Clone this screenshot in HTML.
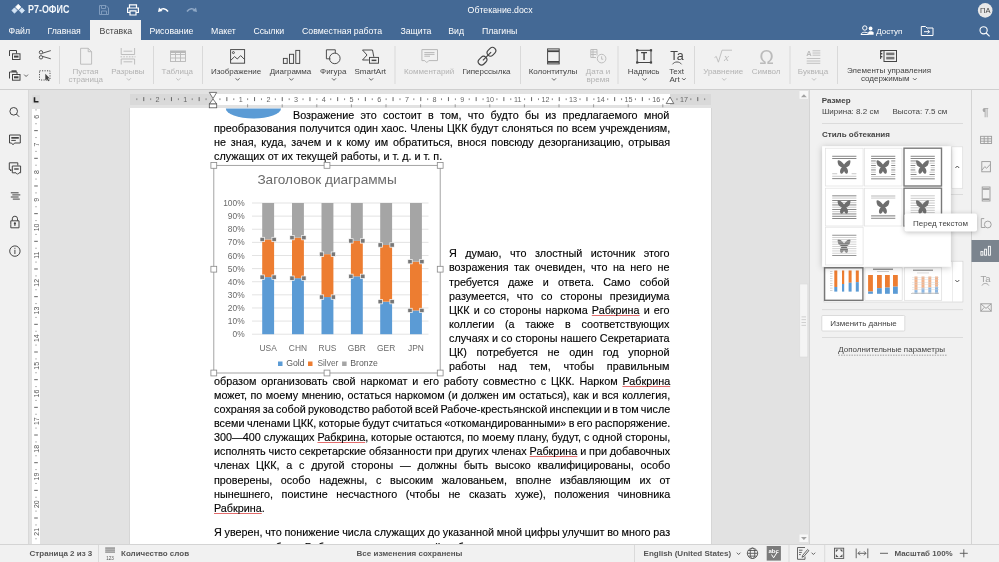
<!DOCTYPE html>
<html><head><meta charset="utf-8">
<style>
*{margin:0;padding:0;box-sizing:border-box}
html,body{width:999px;height:562px;overflow:hidden;background:#e2e2e2;font-family:"Liberation Sans",sans-serif}
.a{position:absolute}
.t{position:absolute;white-space:nowrap;line-height:1}
svg{position:absolute;left:0;top:0;overflow:visible;will-change:transform}
#hdr{left:0;top:0;width:999px;height:40px;background:#446995}
#tb{left:0;top:40px;width:999px;height:50px;background:#f1f1f1;border-bottom:1px solid #cfcfcf}
#lp{left:0;top:90px;width:29px;height:454px;background:#f1f1f1;border-right:1px solid #d8d8d8}
#rp{left:809px;top:90px;width:163px;height:454px;background:#f1f1f1;border-left:1px solid #d4d4d4}
#rb{left:971px;top:90px;width:28px;height:454px;background:#f1f1f1;border-left:1px solid #d4d4d4}
#sb{left:0;top:544px;width:999px;height:18px;background:#f1f1f1;border-top:1px solid #d4d4d4}
#page{left:130px;top:108px;width:581px;height:436px;background:#fff}
.dl{position:absolute;font-size:10.8px;color:#000;-webkit-text-stroke:0.22px rgba(0,0,0,0.6);white-space:nowrap;text-align:justify;text-align-last:justify;line-height:1;height:11px;will-change:transform}
.dn{text-align-last:left}
.sp{text-decoration:underline;text-decoration-color:#e46c6c;text-underline-offset:1px;text-decoration-thickness:1px;text-decoration-skip-ink:none}

</style></head><body>
<div id="hdr" class="a"></div>
<div id="tb" class="a"></div>
<div id="lp" class="a"></div>
<div id="page" class="a"></div>
<div id="rp" class="a"></div>
<div id="rb" class="a"></div>
<div id="sb" class="a"></div>
<div class="a" style="left:129px;top:108px;width:1px;height:436px;background:#d6d6d6"></div>
<div class="a" style="left:711px;top:108px;width:1px;height:436px;background:#d6d6d6"></div>
<div class="a" style="left:90px;top:20px;width:50.5px;height:20px;background:#f1f1f1"></div>
<svg width="999" height="40" style="font-family:'Liberation Sans'">
 <g font-size="8.75" fill="#fff">
  <text x="8.5" y="33.5">Файл</text>
  <text x="47.5" y="33.5">Главная</text>
  <text x="99.6" y="33.5" fill="#444">Вставка</text>
  <text x="149.4" y="33.5">Рисование</text>
  <text x="211" y="33.5">Макет</text>
  <text x="253.4" y="33.5">Ссылки</text>
  <text x="302" y="33.5">Совместная работа</text>
  <text x="400.4" y="33.5">Защита</text>
  <text x="448.2" y="33.5">Вид</text>
  <text x="481.9" y="33.5">Плагины</text>
  <text x="467.6" y="12.6">Обтекание.docx</text>
  <text x="876.3" y="34.2" font-size="8">Доступ</text>
 </g>
 <text x="28" y="12.8" font-size="10" font-weight="bold" fill="#f4f8fc" textLength="41.4" lengthAdjust="spacingAndGlyphs">Р7-ОФИС</text>
 <!-- logo diamonds -->
 <path d="M18.2 4.3 L20.9 7 L18.2 9.7 L15.5 7Z" fill="#fff" stroke="#fff" stroke-width="0.7" stroke-linejoin="round"/>
 <path d="M14.5 7.8 L17.2 10.5 L14.5 13.2 L11.8 10.5Z" fill="#d3e4f6" stroke="#d3e4f6" stroke-width="0.7" stroke-linejoin="round"/>
 <path d="M21.9 7.8 L24.6 10.5 L21.9 13.2 L19.2 10.5Z" fill="#d3e4f6" stroke="#d3e4f6" stroke-width="0.7" stroke-linejoin="round"/>
 <!-- save (disabled) -->
 <g fill="none" stroke="#7f9bbd" stroke-width="1">
  <path d="M99.5 5.5 H106 L108.5 8 V14.5 H99.5Z"/>
  <path d="M101.5 5.5 V8.5 H105.5 V5.5"/>
  <path d="M101.5 14.5 V11 H106.5 V14.5"/>
 </g>
 <!-- print -->
 <g fill="none" stroke="#fff" stroke-width="1.2">
  <path d="M129.5 8 V4.8 H136.5 V8"/>
  <path d="M130 12.5 H127.6 V8 H138.4 V12.5 H136"/>
  <path d="M130 10.8 H136 V15 H130Z"/>
 </g>
 <!-- undo -->
 <path d="M159 7.5 L158 12 L162.5 11 Z" fill="#fff"/>
 <path d="M160 10.2 C162 8.2 165.5 8 168 11.5" fill="none" stroke="#fff" stroke-width="1.6"/>
 <!-- redo (disabled) -->
 <path d="M196 7.5 L197 12 L192.5 11 Z" fill="#8fa8c6"/>
 <path d="M195 10.2 C193 8.2 189.5 8 187 11.5" fill="none" stroke="#8fa8c6" stroke-width="1.6"/>
 <!-- avatar -->
 <circle cx="985.2" cy="10.4" r="7.3" fill="#e8e8e8"/>
 <text x="985.2" y="13.2" font-size="7.5" fill="#444" text-anchor="middle">ПА</text>
 <!-- users icon -->
 <g fill="none" stroke="#fff" stroke-width="1">
  <circle cx="864.8" cy="28" r="2.2"/>
  <path d="M861 34.5 C861 31.5 868.5 31.5 868.5 34.5 Z"/>
 </g>
 <circle cx="870.6" cy="28.5" r="1.9" fill="#fff"/>
 <path d="M868.2 34.7 V32.5 C868.5 30.8 872.8 30.8 873.6 32.5 V34.7Z" fill="#fff"/>
 <!-- open folder icon -->
 <g fill="none" stroke="#fff" stroke-width="1">
  <path d="M921.3 26.5 H925.5 L927 28 H933 V35.5 H921.3 Z"/>
  <path d="M924 31.7 H929.5 M927.7 29.9 L929.5 31.7 L927.7 33.5"/>
 </g>
 <!-- search -->
 <g fill="none" stroke="#fff" stroke-width="1.1">
  <circle cx="983.6" cy="30.3" r="3.6"/>
  <path d="M986.2 33 L989.6 36.3"/>
 </g>
</svg>
<svg width="999" height="90" style="font-family:'Liberation Sans'">
 <!-- separators -->
 <g fill="#d9d9d9">
  <rect x="59" y="46" width="1" height="38"/><rect x="153" y="46" width="1" height="38"/>
  <rect x="202" y="46" width="1" height="38"/><rect x="394.5" y="46" width="1" height="38"/>
  <rect x="520" y="46" width="1" height="38"/><rect x="617.5" y="46" width="1" height="38"/>
  <rect x="694" y="46" width="1" height="38"/><rect x="789.5" y="46" width="1" height="38"/>
  <rect x="837" y="46" width="1" height="38"/>
 </g>
 <g font-size="8" fill="#444" text-anchor="middle">
  <text x="236.1" y="73.6">Изображение</text>
  <text x="290.5" y="73.6">Диаграмма</text>
  <text x="333.2" y="73.6">Фигура</text>
  <text x="370.3" y="73.6">SmartArt</text>
  <text x="486.5" y="73.6">Гиперссылка</text>
  <text x="553" y="73.6">Колонтитулы</text>
  <text x="643.6" y="73.6">Надпись</text>
  <text x="676.6" y="73.6">Text</text>
  <text x="674.5" y="81.5">Art</text>
  <text x="889" y="73.4">Элементы управления</text>
  <text x="885.2" y="81.4">содержимым</text>
 </g>
 <g font-size="8" fill="#b3b3b3" text-anchor="middle">
  <text x="85.6" y="74.3">Пустая</text>
  <text x="85.8" y="82.3">страница</text>
  <text x="127.8" y="74.3">Разрывы</text>
  <text x="177.3" y="74.3">Таблица</text>
  <text x="429.1" y="73.6">Комментарий</text>
  <text x="598" y="73.6">Дата и</text>
  <text x="598" y="81.6">время</text>
  <text x="723.2" y="73.6">Уравнение</text>
  <text x="766.1" y="73.6">Символ</text>
  <text x="813" y="73.6">Буквица</text>
 </g>
 <!-- chevrons -->
 <g fill="none" stroke="#555" stroke-width="0.9">
  <path d="M235.6 78.3 L237.6 80.3 L239.6 78.3"/>
  <path d="M289.4 78.3 L291.4 80.3 L293.4 78.3"/>
  <path d="M332.0 78.3 L334.0 80.3 L336.0 78.3"/>
  <path d="M369.2 78.3 L371.2 80.3 L373.2 78.3"/>
  <path d="M552.0 78.3 L554.0 80.3 L556.0 78.3"/>
  <path d="M642.6 78.3 L644.6 80.3 L646.6 78.3"/>
  <path d="M682.1 78.2 L683.9 80 L685.7 78.2"/>
  <path d="M913.0 78.2 L914.8 80 L916.6 78.2"/>
  <path d="M24.2 74.6 L26.1 76.5 L28 74.6"/>
 </g>
 <g fill="none" stroke="#bbb" stroke-width="0.9">
  <path d="M126.8 78.3 L128.8 80.3 L130.8 78.3"/>
  <path d="M176.3 78.3 L178.3 80.3 L180.3 78.3"/>
  <path d="M722.2 78.3 L724.2 80.3 L726.2 78.3"/>
  <path d="M812.0 78.3 L814.0 80.3 L816.0 78.3"/>
 </g>
 <!-- copy -->
 <g fill="none" stroke="#444" stroke-width="1">
  <path d="M9.5 56 V50.5 H16.5 V53.5"/>
  <rect x="12.5" y="53.8" width="7.5" height="5.7"/>
 </g>
 <rect x="14" y="55.6" width="4.5" height="2" fill="#444"/>
 <!-- cut -->
 <g fill="none" stroke="#444" stroke-width="0.9">
  <circle cx="41" cy="52.3" r="1.7"/><circle cx="41" cy="57.3" r="1.7"/>
  <path d="M42.5 53.2 L50.8 50.6 M42.5 56.4 L50.8 58.8"/>
 </g>
 <!-- paste -->
 <g fill="none" stroke="#444" stroke-width="1">
  <path d="M9.5 78.5 V72 H17 V74"/>
  <rect x="12.5" y="74.5" width="7.5" height="5.7"/>
 </g>
 <rect x="11.5" y="70.3" width="5" height="1.6" fill="#444"/>
 <rect x="14" y="76.3" width="4.5" height="2" fill="#444"/>
 <!-- select all -->
 <path d="M39.5 70.8 H50 V80 H39.5Z" fill="none" stroke="#444" stroke-width="0.9" stroke-dasharray="1.2 1.3"/>
 <path d="M45.3 73.8 L45.3 80.5 L46.8 79 L48.2 81.3 L49.2 80.8 L47.9 78.5 L49.7 78.3Z" fill="#444"/>
 <!-- blank page (disabled) -->
 <path d="M80.6 48.3 H88.2 L91.6 51.7 V64.2 H80.6Z M88.2 48.3 V51.7 H91.6" fill="none" stroke="#b8b8b8" stroke-width="0.9"/>
 <!-- breaks (disabled) -->
 <g fill="none" stroke="#b8b8b8" stroke-width="0.9">
  <path d="M121.2 48 V54.5 H134.6 V48"/>
  <path d="M121.2 64.5 V59 H134.6 V64.5"/>
  <path d="M123.5 51.2 H132.3 M123.5 61.8 H132.3"/>
  <path d="M120.5 56.8 H135.5" stroke-dasharray="1.6 1.2"/>
 </g>
 <!-- table (disabled) -->
 <g fill="none" stroke="#b8b8b8" stroke-width="0.9">
  <rect x="170.5" y="51" width="15" height="10.5"/>
  <path d="M170.5 54.5 H185.5 M170.5 58 H185.5 M175.5 51 V61.5 M180.5 51 V61.5"/>
 </g>
 <rect x="170.5" y="50.8" width="15" height="2.2" fill="#b8b8b8"/>
 <!-- image -->
 <g fill="none" stroke="#444" stroke-width="0.95">
  <rect x="230.6" y="49.6" width="14" height="13.6"/>
  <circle cx="233.4" cy="52.6" r="1"/>
  <path d="M230.8 60.3 L234.6 56.6 L237.3 59 L240.6 55.6 L244.5 59.4"/>
 </g>
 <!-- chart -->
 <g fill="none" stroke="#444" stroke-width="0.95">
  <rect x="283.4" y="58.4" width="3.8" height="5"/>
  <rect x="289.5" y="54.3" width="4.1" height="9.1"/>
  <rect x="295.8" y="50.4" width="3.9" height="13"/>
 </g>
 <!-- shape -->
 <g fill="none" stroke="#444" stroke-width="0.95">
  <path d="M330.5 58.8 H326.4 V49.8 H335.3 V53.3"/>
  <circle cx="334.8" cy="58.4" r="5.3"/>
 </g>
 <!-- smartart -->
 <g fill="none" stroke="#444" stroke-width="0.95">
  <path d="M373.8 56.8 L372.5 50 H362.5 L367 55 L362.5 60 H368.8"/>
  <rect x="369.5" y="57.4" width="9" height="5.8"/>
 </g>
 <rect x="371.6" y="59.6" width="4.8" height="1.5" fill="#444"/>
 <!-- comment (disabled) -->
 <g fill="none" stroke="#b8b8b8" stroke-width="1">
  <path d="M421.9 49.6 H437.5 V60.6 H428.8 L426.8 62.6 L424.8 60.6 H421.9Z"/>
  <path d="M424.3 52.6 H434.5 M424.3 54.4 H434.5 M424.3 56.2 H430"/>
 </g>
 <!-- hyperlink -->
 <g fill="none" stroke="#444" stroke-width="1.15" transform="translate(487 56.2) rotate(-45)">
  <rect x="1.6" y="-3.3" width="9.4" height="6.6" rx="3.3"/>
  <rect x="-11" y="-3.3" width="9.4" height="6.6" rx="3.3"/>
  <path d="M-5.8 0 H5.8"/>
 </g>
 <!-- header/footer -->
 <g fill="none" stroke="#444" stroke-width="1">
  <rect x="547.6" y="48.9" width="11.6" height="15"/>
 </g>
 <rect x="548" y="50.3" width="11" height="1.8" fill="#444"/>
 <rect x="548" y="61" width="11" height="1.8" fill="#444"/>
 <!-- date time (disabled) -->
 <g fill="none" stroke="#b8b8b8" stroke-width="0.9">
  <path d="M597 55.5 V49.5 H590.8 V57.5 H596"/>
  <path d="M590.8 52 H597 M593 49.5 V57.5 M590.8 54.5 H596"/>
  <circle cx="601.6" cy="58.6" r="4.3"/>
  <path d="M601.6 56.3 V59.2 H603.2"/>
 </g>
 <!-- textbox -->
 <g fill="none" stroke="#444" stroke-width="1">
  <rect x="637.2" y="50.3" width="13.8" height="12.2"/>
 </g>
 <g fill="#444">
  <rect x="636.1" y="49.2" width="2.2" height="2.2"/><rect x="649.9" y="49.2" width="2.2" height="2.2"/>
  <rect x="636.1" y="61.4" width="2.2" height="2.2"/><rect x="649.9" y="61.4" width="2.2" height="2.2"/>
 </g>
 <text x="644.1" y="60.3" font-size="10" font-weight="bold" fill="#444" text-anchor="middle">T</text>
 <!-- text art -->
 <text x="677" y="59.8" font-size="12.6" fill="#444" text-anchor="middle">Ta</text>
 <path d="M672.5 64.3 C674.5 61.2 679.5 61.2 681.5 64.3" fill="none" stroke="#444" stroke-width="0.9"/>
 <!-- equation (disabled) -->
 <g fill="none" stroke="#bbb" stroke-width="0.9">
  <path d="M714.5 57.6 L716.3 56.5 L718.4 62.2 L722 50.2 H732"/>
 </g>
 <text x="726.5" y="61" font-size="11" font-style="italic" fill="#bbb" text-anchor="middle" font-family="Liberation Serif">x</text>
 <!-- symbol (disabled) -->
 <text x="766.5" y="63.6" font-size="19.5" fill="#bbb" text-anchor="middle" font-family="Liberation Sans">Ω</text>
 <!-- drop cap (disabled) -->
 <text x="809" y="56.4" font-size="7.5" font-weight="bold" fill="#bbb" text-anchor="middle">A</text>
 <g fill="none" stroke="#bbb" stroke-width="0.9">
  <path d="M812.5 50.8 H820.3 M812.5 53 H820.3 M812.5 55.2 H820.3 M806.7 58.5 H820.3 M806.7 61 H820.3 M806.7 63.3 H820.3"/>
 </g>
 <!-- content controls -->
 <g fill="none" stroke="#444" stroke-width="1">
  <rect x="884" y="50.5" width="12.5" height="11"/>
  <path d="M884 50.5 H880.6 V59"/>
 </g>
 <rect x="880.3" y="50.2" width="2" height="1.4" fill="#444"/>
 <rect x="880.3" y="53" width="2" height="1.4" fill="#444"/>
 <rect x="880.3" y="56" width="2" height="1.4" fill="#444"/>
 <rect x="886.2" y="52.6" width="8.2" height="2.6" fill="#777"/>
 <rect x="886.2" y="56.8" width="8.2" height="2.6" fill="#777"/>
</svg>
<svg width="999" height="562" style="font-family:'Liberation Sans'">
 <g fill="none" stroke="#444" stroke-width="1">
  <circle cx="13.7" cy="111.3" r="3.8"/><path d="M16.4 114 L19.2 116.8"/>
  <path d="M9.5 135 H20.3 V143 H14.5 L13 144.8 L11.5 143 H9.5Z"/>
  <path d="M17.8 165.5 V162.8 H9.3 V169.5 H10.5 V171 L12 169.5"/>
  <path d="M12.3 166 H20.6 V172.8 H19 L17.5 174.3 L16 172.8 H12.3Z"/>
  <path d="M10.8 224.5 V220.8 H19 V227.8 H10.8 Z"/>
  <path d="M12.3 220.8 V218.8 A2.6 2.6 0 0 1 17.5 218.8 V220.8"/>
  <circle cx="14.9" cy="251.1" r="5.2"/>
 </g>
 <g fill="#444">
  <rect x="11.3" y="137" width="7.5" height="1.7"/><rect x="11.3" y="139.9" width="4.5" height="1"/>
  <rect x="14.2" y="168.3" width="4.5" height="1.4"/>
  <rect x="10.8" y="192.3" width="7.8" height="1"/><rect x="12.3" y="194.4" width="8" height="1"/>
  <rect x="10.8" y="196.5" width="7.8" height="1"/><rect x="12.8" y="198.6" width="7" height="1"/>
    <rect x="14.4" y="249.8" width="1" height="4.2"/><rect x="14.4" y="247.8" width="1" height="1"/>
 </g>
 <circle cx="14.9" cy="223.4" r="1.1" fill="#444"/><rect x="14.4" y="223.6" width="1" height="2.4" fill="#444"/>
</svg>

<div class="a" style="left:130px;top:94px;width:581px;height:10.5px;background:#d9d9d9"></div>
<div class="a" style="left:213px;top:94px;width:457px;height:10.5px;background:#fff"></div>
<div class="a" style="left:32px;top:95px;width:8px;height:9px;background:#dcdcdc"></div>
<div class="a" style="left:32px;top:108.5px;width:8px;height:436px;background:#fff"></div>
<svg width="999" height="562" style="font-family:'Liberation Sans'">
<path d="M34.5 97.2 V101.8 H38.5" fill="none" stroke="#222" stroke-width="1.6"/>
<rect x="136.32" y="98.3" width="1" height="1.8" fill="#888"/>
<rect x="143.25" y="97.1" width="1" height="4" fill="#666"/>
<rect x="150.18" y="98.3" width="1" height="1.8" fill="#888"/>
<text x="157.60" y="102.2" font-size="7.2" fill="#666" text-anchor="middle">2</text>
<rect x="164.03" y="98.3" width="1" height="1.8" fill="#888"/>
<rect x="170.95" y="97.1" width="1" height="4" fill="#666"/>
<rect x="177.88" y="98.3" width="1" height="1.8" fill="#888"/>
<text x="185.30" y="102.2" font-size="7.2" fill="#666" text-anchor="middle">1</text>
<rect x="191.72" y="98.3" width="1" height="1.8" fill="#888"/>
<rect x="198.65" y="97.1" width="1" height="4" fill="#666"/>
<rect x="205.57" y="98.3" width="1" height="1.8" fill="#888"/>
<rect x="219.43" y="98.3" width="1" height="1.8" fill="#888"/>
<rect x="226.35" y="97.1" width="1" height="4" fill="#666"/>
<rect x="233.28" y="98.3" width="1" height="1.8" fill="#888"/>
<text x="240.70" y="102.2" font-size="7.2" fill="#666" text-anchor="middle">1</text>
<rect x="247.12" y="98.3" width="1" height="1.8" fill="#888"/>
<rect x="254.05" y="97.1" width="1" height="4" fill="#666"/>
<rect x="260.98" y="98.3" width="1" height="1.8" fill="#888"/>
<text x="268.40" y="102.2" font-size="7.2" fill="#666" text-anchor="middle">2</text>
<rect x="274.82" y="98.3" width="1" height="1.8" fill="#888"/>
<rect x="281.75" y="97.1" width="1" height="4" fill="#666"/>
<rect x="288.68" y="98.3" width="1" height="1.8" fill="#888"/>
<text x="296.10" y="102.2" font-size="7.2" fill="#666" text-anchor="middle">3</text>
<rect x="302.52" y="98.3" width="1" height="1.8" fill="#888"/>
<rect x="309.45" y="97.1" width="1" height="4" fill="#666"/>
<rect x="316.38" y="98.3" width="1" height="1.8" fill="#888"/>
<text x="323.80" y="102.2" font-size="7.2" fill="#666" text-anchor="middle">4</text>
<rect x="330.23" y="98.3" width="1" height="1.8" fill="#888"/>
<rect x="337.15" y="97.1" width="1" height="4" fill="#666"/>
<rect x="344.07" y="98.3" width="1" height="1.8" fill="#888"/>
<text x="351.50" y="102.2" font-size="7.2" fill="#666" text-anchor="middle">5</text>
<rect x="357.92" y="98.3" width="1" height="1.8" fill="#888"/>
<rect x="364.85" y="97.1" width="1" height="4" fill="#666"/>
<rect x="371.77" y="98.3" width="1" height="1.8" fill="#888"/>
<text x="379.20" y="102.2" font-size="7.2" fill="#666" text-anchor="middle">6</text>
<rect x="385.62" y="98.3" width="1" height="1.8" fill="#888"/>
<rect x="392.55" y="97.1" width="1" height="4" fill="#666"/>
<rect x="399.48" y="98.3" width="1" height="1.8" fill="#888"/>
<text x="406.90" y="102.2" font-size="7.2" fill="#666" text-anchor="middle">7</text>
<rect x="413.32" y="98.3" width="1" height="1.8" fill="#888"/>
<rect x="420.25" y="97.1" width="1" height="4" fill="#666"/>
<rect x="427.17" y="98.3" width="1" height="1.8" fill="#888"/>
<text x="434.60" y="102.2" font-size="7.2" fill="#666" text-anchor="middle">8</text>
<rect x="441.02" y="98.3" width="1" height="1.8" fill="#888"/>
<rect x="447.95" y="97.1" width="1" height="4" fill="#666"/>
<rect x="454.88" y="98.3" width="1" height="1.8" fill="#888"/>
<text x="462.30" y="102.2" font-size="7.2" fill="#666" text-anchor="middle">9</text>
<rect x="468.72" y="98.3" width="1" height="1.8" fill="#888"/>
<rect x="475.65" y="97.1" width="1" height="4" fill="#666"/>
<rect x="482.57" y="98.3" width="1" height="1.8" fill="#888"/>
<text x="490.00" y="102.2" font-size="7.2" fill="#666" text-anchor="middle">10</text>
<rect x="496.43" y="98.3" width="1" height="1.8" fill="#888"/>
<rect x="503.35" y="97.1" width="1" height="4" fill="#666"/>
<rect x="510.27" y="98.3" width="1" height="1.8" fill="#888"/>
<text x="517.70" y="102.2" font-size="7.2" fill="#666" text-anchor="middle">11</text>
<rect x="524.12" y="98.3" width="1" height="1.8" fill="#888"/>
<rect x="531.05" y="97.1" width="1" height="4" fill="#666"/>
<rect x="537.97" y="98.3" width="1" height="1.8" fill="#888"/>
<text x="545.40" y="102.2" font-size="7.2" fill="#666" text-anchor="middle">12</text>
<rect x="551.83" y="98.3" width="1" height="1.8" fill="#888"/>
<rect x="558.75" y="97.1" width="1" height="4" fill="#666"/>
<rect x="565.67" y="98.3" width="1" height="1.8" fill="#888"/>
<text x="573.10" y="102.2" font-size="7.2" fill="#666" text-anchor="middle">13</text>
<rect x="579.52" y="98.3" width="1" height="1.8" fill="#888"/>
<rect x="586.45" y="97.1" width="1" height="4" fill="#666"/>
<rect x="593.38" y="98.3" width="1" height="1.8" fill="#888"/>
<text x="600.80" y="102.2" font-size="7.2" fill="#666" text-anchor="middle">14</text>
<rect x="607.22" y="98.3" width="1" height="1.8" fill="#888"/>
<rect x="614.15" y="97.1" width="1" height="4" fill="#666"/>
<rect x="621.08" y="98.3" width="1" height="1.8" fill="#888"/>
<text x="628.50" y="102.2" font-size="7.2" fill="#666" text-anchor="middle">15</text>
<rect x="634.92" y="98.3" width="1" height="1.8" fill="#888"/>
<rect x="641.85" y="97.1" width="1" height="4" fill="#666"/>
<rect x="648.77" y="98.3" width="1" height="1.8" fill="#888"/>
<text x="656.20" y="102.2" font-size="7.2" fill="#666" text-anchor="middle">16</text>
<rect x="662.62" y="98.3" width="1" height="1.8" fill="#888"/>
<rect x="669.55" y="97.1" width="1" height="4" fill="#666"/>
<rect x="676.47" y="98.3" width="1" height="1.8" fill="#888"/>
<text x="683.90" y="102.2" font-size="7.2" fill="#666" text-anchor="middle">17</text>
<rect x="690.33" y="98.3" width="1" height="1.8" fill="#888"/>
<rect x="697.25" y="97.1" width="1" height="4" fill="#666"/>
<rect x="704.17" y="98.3" width="1" height="1.8" fill="#888"/>
<rect x="247.10" y="104.3" width="1" height="3" fill="#999"/>
<rect x="281.70" y="104.3" width="1" height="3" fill="#999"/>
<rect x="316.30" y="104.3" width="1" height="3" fill="#999"/>
<rect x="350.90" y="104.3" width="1" height="3" fill="#999"/>
<rect x="385.50" y="104.3" width="1" height="3" fill="#999"/>
<rect x="420.10" y="104.3" width="1" height="3" fill="#999"/>
<rect x="454.70" y="104.3" width="1" height="3" fill="#999"/>
<rect x="489.30" y="104.3" width="1" height="3" fill="#999"/>
<rect x="523.90" y="104.3" width="1" height="3" fill="#999"/>
<rect x="558.50" y="104.3" width="1" height="3" fill="#999"/>
<rect x="593.10" y="104.3" width="1" height="3" fill="#999"/>
<rect x="627.70" y="104.3" width="1" height="3" fill="#999"/>
<rect x="662.30" y="104.3" width="1" height="3" fill="#999"/>
<g fill="#fff" stroke="#555" stroke-width="0.8">
 <path d="M209.3 92.4 H216.7 L213 98.6 Z"/>
 <path d="M213 99 L216.7 104 H209.3 Z"/>
 <rect x="209.3" y="104" width="7.4" height="3.8"/>
 <path d="M670 97 L673.8 103.6 H666.2 Z"/>
</g>
<rect x="35.5" y="109.38" width="1" height="1" fill="#777"/>
<text x="0" y="0" font-size="7" fill="#555" text-anchor="middle" transform="translate(38.6 116.80) rotate(-90)">6</text>
<rect x="35.5" y="123.22" width="1" height="1" fill="#777"/>
<rect x="34.2" y="130.13" width="3.6" height="1" fill="#666"/>
<rect x="35.5" y="137.05" width="1" height="1" fill="#777"/>
<text x="0" y="0" font-size="7" fill="#555" text-anchor="middle" transform="translate(38.6 144.47) rotate(-90)">7</text>
<rect x="35.5" y="150.89" width="1" height="1" fill="#777"/>
<rect x="34.2" y="157.81" width="3.6" height="1" fill="#666"/>
<rect x="35.5" y="164.72" width="1" height="1" fill="#777"/>
<text x="0" y="0" font-size="7" fill="#555" text-anchor="middle" transform="translate(38.6 172.14) rotate(-90)">8</text>
<rect x="35.5" y="178.56" width="1" height="1" fill="#777"/>
<rect x="34.2" y="185.48" width="3.6" height="1" fill="#666"/>
<rect x="35.5" y="192.39" width="1" height="1" fill="#777"/>
<text x="0" y="0" font-size="7" fill="#555" text-anchor="middle" transform="translate(38.6 199.81) rotate(-90)">9</text>
<rect x="35.5" y="206.23" width="1" height="1" fill="#777"/>
<rect x="34.2" y="213.14" width="3.6" height="1" fill="#666"/>
<rect x="35.5" y="220.06" width="1" height="1" fill="#777"/>
<text x="0" y="0" font-size="7" fill="#555" text-anchor="middle" transform="translate(38.6 227.48) rotate(-90)">10</text>
<rect x="35.5" y="233.90" width="1" height="1" fill="#777"/>
<rect x="34.2" y="240.81" width="3.6" height="1" fill="#666"/>
<rect x="35.5" y="247.73" width="1" height="1" fill="#777"/>
<text x="0" y="0" font-size="7" fill="#555" text-anchor="middle" transform="translate(38.6 255.15) rotate(-90)">11</text>
<rect x="35.5" y="261.57" width="1" height="1" fill="#777"/>
<rect x="34.2" y="268.49" width="3.6" height="1" fill="#666"/>
<rect x="35.5" y="275.40" width="1" height="1" fill="#777"/>
<text x="0" y="0" font-size="7" fill="#555" text-anchor="middle" transform="translate(38.6 282.82) rotate(-90)">12</text>
<rect x="35.5" y="289.24" width="1" height="1" fill="#777"/>
<rect x="34.2" y="296.16" width="3.6" height="1" fill="#666"/>
<rect x="35.5" y="303.07" width="1" height="1" fill="#777"/>
<text x="0" y="0" font-size="7" fill="#555" text-anchor="middle" transform="translate(38.6 310.49) rotate(-90)">13</text>
<rect x="35.5" y="316.91" width="1" height="1" fill="#777"/>
<rect x="34.2" y="323.82" width="3.6" height="1" fill="#666"/>
<rect x="35.5" y="330.74" width="1" height="1" fill="#777"/>
<text x="0" y="0" font-size="7" fill="#555" text-anchor="middle" transform="translate(38.6 338.16) rotate(-90)">14</text>
<rect x="35.5" y="344.58" width="1" height="1" fill="#777"/>
<rect x="34.2" y="351.50" width="3.6" height="1" fill="#666"/>
<rect x="35.5" y="358.41" width="1" height="1" fill="#777"/>
<text x="0" y="0" font-size="7" fill="#555" text-anchor="middle" transform="translate(38.6 365.83) rotate(-90)">15</text>
<rect x="35.5" y="372.25" width="1" height="1" fill="#777"/>
<rect x="34.2" y="379.17" width="3.6" height="1" fill="#666"/>
<rect x="35.5" y="386.08" width="1" height="1" fill="#777"/>
<text x="0" y="0" font-size="7" fill="#555" text-anchor="middle" transform="translate(38.6 393.50) rotate(-90)">16</text>
<rect x="35.5" y="399.92" width="1" height="1" fill="#777"/>
<rect x="34.2" y="406.84" width="3.6" height="1" fill="#666"/>
<rect x="35.5" y="413.75" width="1" height="1" fill="#777"/>
<text x="0" y="0" font-size="7" fill="#555" text-anchor="middle" transform="translate(38.6 421.17) rotate(-90)">17</text>
<rect x="35.5" y="427.59" width="1" height="1" fill="#777"/>
<rect x="34.2" y="434.51" width="3.6" height="1" fill="#666"/>
<rect x="35.5" y="441.42" width="1" height="1" fill="#777"/>
<text x="0" y="0" font-size="7" fill="#555" text-anchor="middle" transform="translate(38.6 448.84) rotate(-90)">18</text>
<rect x="35.5" y="455.26" width="1" height="1" fill="#777"/>
<rect x="34.2" y="462.18" width="3.6" height="1" fill="#666"/>
<rect x="35.5" y="469.09" width="1" height="1" fill="#777"/>
<text x="0" y="0" font-size="7" fill="#555" text-anchor="middle" transform="translate(38.6 476.51) rotate(-90)">19</text>
<rect x="35.5" y="482.93" width="1" height="1" fill="#777"/>
<rect x="34.2" y="489.85" width="3.6" height="1" fill="#666"/>
<rect x="35.5" y="496.76" width="1" height="1" fill="#777"/>
<text x="0" y="0" font-size="7" fill="#555" text-anchor="middle" transform="translate(38.6 504.18) rotate(-90)">20</text>
<rect x="35.5" y="510.60" width="1" height="1" fill="#777"/>
<rect x="34.2" y="517.51" width="3.6" height="1" fill="#666"/>
<rect x="35.5" y="524.43" width="1" height="1" fill="#777"/>
<text x="0" y="0" font-size="7" fill="#555" text-anchor="middle" transform="translate(38.6 531.85) rotate(-90)">21</text>
<rect x="35.5" y="538.27" width="1" height="1" fill="#777"/>
<path d="M225.8 108.5 A27.6 10 0 0 0 281 108.5 Z" fill="#5b9bd5"/>
<rect x="799.5" y="91" width="8.5" height="7.8" fill="#f7f7f7"/>
<path d="M801 97.2 L803.9 94.3 L806.8 97.2Z" fill="#a2a2a2"/>
<rect x="799.5" y="534.5" width="8.5" height="7.5" fill="#f7f7f7"/>
<path d="M801 537 L803.9 539.9 L806.8 537Z" fill="#a2a2a2"/>
<rect x="799.8" y="284" width="8" height="73" fill="#f4f4f4" stroke="#dadada" stroke-width="0.6"/>
<g fill="#c6c6c6"><rect x="801.5" y="316.5" width="4.5" height="0.8"/><rect x="801.5" y="319.3" width="4.5" height="0.8"/><rect x="801.5" y="322.1" width="4.5" height="0.8"/><rect x="801.5" y="324.9" width="4.5" height="0.8"/></g>
</svg>
<div class="dl" style="left:293.4px;top:109.54px;width:376.4px">Возражение это состоит в том, что будто бы из предлагаемого мной</div>
<div class="dl" style="left:213.6px;top:123.44px;width:456.2px">преобразования получится один хаос. Члены ЦКК будут слоняться по всем учреждениям,</div>
<div class="dl" style="left:213.6px;top:137.34px;width:456.2px">не зная, куда, зачем и к кому им обратиться, внося повсюду дезорганизацию, отрывая</div>
<div class="dl dn" style="left:213.6px;top:151.24px;width:240px">служащих от их текущей работы, и т. д. и т. п.</div>
<div class="dl" style="left:449.3px;top:248.24px;width:220.5px">Я думаю, что злостный источник этого</div>
<div class="dl" style="left:449.3px;top:262.39px;width:220.5px">возражения так очевиден, что на него не</div>
<div class="dl" style="left:449.3px;top:276.54px;width:220.5px">требуется даже и ответа. Само собой</div>
<div class="dl" style="left:449.3px;top:290.69px;width:220.5px">разумеется, что со стороны президиума</div>
<div class="dl" style="left:449.3px;top:304.84px;width:220.5px">ЦКК и со стороны наркома <span class="sp">Рабкрина</span> и его</div>
<div class="dl" style="left:449.3px;top:318.99px;width:220.5px">коллегии (а также в соответствующих</div>
<div class="dl" style="left:449.3px;top:333.14px;width:220.5px">случаях и со стороны нашего Секретариата</div>
<div class="dl" style="left:449.3px;top:347.29px;width:220.5px">ЦК) потребуется не один год упорной</div>
<div class="dl" style="left:449.3px;top:361.44px;width:220.5px">работы над тем, чтобы правильным</div>
<div class="dl" style="left:213.6px;top:375.59px;width:456.2px">образом организовать свой наркомат и его работу совместно с ЦКК. Нарком <span class="sp">Рабкрина</span></div>
<div class="dl" style="left:213.6px;top:389.74px;width:456.2px">может, по моему мнению, остаться наркомом (и должен им остаться), как и вся коллегия,</div>
<div class="dl" style="left:213.6px;top:403.89px;width:456.2px;word-spacing:-0.75px">сохраняя за собой руководство работой всей Рабоче-крестьянской инспекции и в том числе</div>
<div class="dl" style="left:213.6px;top:418.04px;width:456.2px;word-spacing:-0.6px">всеми членами ЦКК, которые будут считаться «откомандированными» в его распоряжение.</div>
<div class="dl" style="left:213.6px;top:432.19px;width:456.2px;word-spacing:-0.12px">300—400 служащих <span class="sp">Рабкрина</span>, которые остаются, по моему плану, будут, с одной стороны,</div>
<div class="dl" style="left:213.6px;top:446.34px;width:456.2px;word-spacing:-0.15px">исполнять чисто секретарские обязанности при других членах <span class="sp">Рабкрина</span> и при добавочных</div>
<div class="dl" style="left:213.6px;top:460.49px;width:456.2px">членах ЦКК, а с другой стороны — должны быть высоко квалифицированы, особо</div>
<div class="dl" style="left:213.6px;top:474.64px;width:456.2px">проверены, особо надежны, с высоким жалованьем, вполне избавляющим их от</div>
<div class="dl" style="left:213.6px;top:488.79px;width:456.2px">нынешнего, поистине несчастного (чтобы не сказать хуже), положения чиновника</div>
<div class="dl dn" style="left:213.6px;top:502.94px;width:200px"><span class="sp">Рабкрина</span>.</div>
<div class="dl" style="left:213.6px;top:527.44px;width:456.2px;word-spacing:-0.3px">Я уверен, что понижение числа служащих до указанной мной цифры улучшит во много раз</div>
<div class="dl" style="left:213.6px;top:541.54px;width:456.2px">качество работы <span class="sp">Рабкрина</span> и качество всей работы, давая в то же время возможность</div>
<svg width="999" height="562" style="font-family:'Liberation Sans'">
<rect x="213.8" y="165.4" width="226.4" height="207.6" fill="#fff" stroke="#9a9a9a" stroke-width="0.9"/>
<rect x="252" y="333.70" width="176.5" height="1" fill="#e3e3e3"/>
<rect x="252" y="320.58" width="176.5" height="1" fill="#e3e3e3"/>
<rect x="252" y="307.46" width="176.5" height="1" fill="#e3e3e3"/>
<rect x="252" y="294.34" width="176.5" height="1" fill="#e3e3e3"/>
<rect x="252" y="281.22" width="176.5" height="1" fill="#e3e3e3"/>
<rect x="252" y="268.10" width="176.5" height="1" fill="#e3e3e3"/>
<rect x="252" y="254.98" width="176.5" height="1" fill="#e3e3e3"/>
<rect x="252" y="241.86" width="176.5" height="1" fill="#e3e3e3"/>
<rect x="252" y="228.74" width="176.5" height="1" fill="#e3e3e3"/>
<rect x="252" y="215.62" width="176.5" height="1" fill="#e3e3e3"/>
<rect x="252" y="202.50" width="176.5" height="1" fill="#e3e3e3"/>
<text x="244.6" y="337.30" font-size="8.4" fill="#6a6a6a" text-anchor="end">0%</text>
<text x="244.6" y="324.18" font-size="8.4" fill="#6a6a6a" text-anchor="end">10%</text>
<text x="244.6" y="311.06" font-size="8.4" fill="#6a6a6a" text-anchor="end">20%</text>
<text x="244.6" y="297.94" font-size="8.4" fill="#6a6a6a" text-anchor="end">30%</text>
<text x="244.6" y="284.82" font-size="8.4" fill="#6a6a6a" text-anchor="end">40%</text>
<text x="244.6" y="271.70" font-size="8.4" fill="#6a6a6a" text-anchor="end">50%</text>
<text x="244.6" y="258.58" font-size="8.4" fill="#6a6a6a" text-anchor="end">60%</text>
<text x="244.6" y="245.46" font-size="8.4" fill="#6a6a6a" text-anchor="end">70%</text>
<text x="244.6" y="232.34" font-size="8.4" fill="#6a6a6a" text-anchor="end">80%</text>
<text x="244.6" y="219.22" font-size="8.4" fill="#6a6a6a" text-anchor="end">90%</text>
<text x="244.6" y="206.10" font-size="8.4" fill="#6a6a6a" text-anchor="end">100%</text>
<rect x="262.2" y="277.13" width="11.9" height="57.07" fill="#5b9bd5"/>
<rect x="262.2" y="239.47" width="11.9" height="37.65" fill="#ed7d31"/>
<rect x="262.2" y="203.0" width="11.9" height="36.47" fill="#a5a5a5"/>
<text x="268.15" y="351.4" font-size="8.4" fill="#6a6a6a" text-anchor="middle">USA</text>
<rect x="292.0" y="278.18" width="11.9" height="56.02" fill="#5b9bd5"/>
<rect x="292.0" y="237.64" width="11.9" height="40.54" fill="#ed7d31"/>
<rect x="292.0" y="203.0" width="11.9" height="34.64" fill="#a5a5a5"/>
<text x="297.95" y="351.4" font-size="8.4" fill="#6a6a6a" text-anchor="middle">CHN</text>
<rect x="321.5" y="297.07" width="11.9" height="37.13" fill="#5b9bd5"/>
<rect x="321.5" y="254.17" width="11.9" height="42.90" fill="#ed7d31"/>
<rect x="321.5" y="203.0" width="11.9" height="51.17" fill="#a5a5a5"/>
<text x="327.45" y="351.4" font-size="8.4" fill="#6a6a6a" text-anchor="middle">RUS</text>
<rect x="350.9" y="276.34" width="11.9" height="57.86" fill="#5b9bd5"/>
<rect x="350.9" y="240.92" width="11.9" height="35.42" fill="#ed7d31"/>
<rect x="350.9" y="203.0" width="11.9" height="37.92" fill="#a5a5a5"/>
<text x="356.85" y="351.4" font-size="8.4" fill="#6a6a6a" text-anchor="middle">GBR</text>
<rect x="380.2" y="301.66" width="11.9" height="32.54" fill="#5b9bd5"/>
<rect x="380.2" y="244.98" width="11.9" height="56.68" fill="#ed7d31"/>
<rect x="380.2" y="203.0" width="11.9" height="41.98" fill="#a5a5a5"/>
<text x="386.15" y="351.4" font-size="8.4" fill="#6a6a6a" text-anchor="middle">GER</text>
<rect x="410.0" y="310.45" width="11.9" height="23.75" fill="#5b9bd5"/>
<rect x="410.0" y="261.65" width="11.9" height="48.81" fill="#ed7d31"/>
<rect x="410.0" y="203.0" width="11.9" height="58.65" fill="#a5a5a5"/>
<text x="415.95" y="351.4" font-size="8.4" fill="#6a6a6a" text-anchor="middle">JPN</text>
<rect x="260.00" y="274.93" width="4.4" height="4.4" fill="#777" stroke="#fff" stroke-width="0.7"/>
<rect x="271.90" y="274.93" width="4.4" height="4.4" fill="#777" stroke="#fff" stroke-width="0.7"/>
<rect x="260.00" y="237.27" width="4.4" height="4.4" fill="#777" stroke="#fff" stroke-width="0.7"/>
<rect x="271.90" y="237.27" width="4.4" height="4.4" fill="#777" stroke="#fff" stroke-width="0.7"/>
<rect x="289.80" y="275.98" width="4.4" height="4.4" fill="#777" stroke="#fff" stroke-width="0.7"/>
<rect x="301.70" y="275.98" width="4.4" height="4.4" fill="#777" stroke="#fff" stroke-width="0.7"/>
<rect x="289.80" y="235.44" width="4.4" height="4.4" fill="#777" stroke="#fff" stroke-width="0.7"/>
<rect x="301.70" y="235.44" width="4.4" height="4.4" fill="#777" stroke="#fff" stroke-width="0.7"/>
<rect x="319.30" y="294.87" width="4.4" height="4.4" fill="#777" stroke="#fff" stroke-width="0.7"/>
<rect x="331.20" y="294.87" width="4.4" height="4.4" fill="#777" stroke="#fff" stroke-width="0.7"/>
<rect x="319.30" y="251.97" width="4.4" height="4.4" fill="#777" stroke="#fff" stroke-width="0.7"/>
<rect x="331.20" y="251.97" width="4.4" height="4.4" fill="#777" stroke="#fff" stroke-width="0.7"/>
<rect x="348.70" y="274.14" width="4.4" height="4.4" fill="#777" stroke="#fff" stroke-width="0.7"/>
<rect x="360.60" y="274.14" width="4.4" height="4.4" fill="#777" stroke="#fff" stroke-width="0.7"/>
<rect x="348.70" y="238.72" width="4.4" height="4.4" fill="#777" stroke="#fff" stroke-width="0.7"/>
<rect x="360.60" y="238.72" width="4.4" height="4.4" fill="#777" stroke="#fff" stroke-width="0.7"/>
<rect x="378.00" y="299.46" width="4.4" height="4.4" fill="#777" stroke="#fff" stroke-width="0.7"/>
<rect x="389.90" y="299.46" width="4.4" height="4.4" fill="#777" stroke="#fff" stroke-width="0.7"/>
<rect x="378.00" y="242.78" width="4.4" height="4.4" fill="#777" stroke="#fff" stroke-width="0.7"/>
<rect x="389.90" y="242.78" width="4.4" height="4.4" fill="#777" stroke="#fff" stroke-width="0.7"/>
<rect x="407.80" y="308.25" width="4.4" height="4.4" fill="#777" stroke="#fff" stroke-width="0.7"/>
<rect x="419.70" y="308.25" width="4.4" height="4.4" fill="#777" stroke="#fff" stroke-width="0.7"/>
<rect x="407.80" y="259.45" width="4.4" height="4.4" fill="#777" stroke="#fff" stroke-width="0.7"/>
<rect x="419.70" y="259.45" width="4.4" height="4.4" fill="#777" stroke="#fff" stroke-width="0.7"/>
<text x="257.4" y="184.4" font-size="13.6" fill="#6a6a6a">Заголовок диаграммы</text>
<rect x="278" y="361.5" width="4.5" height="4.5" fill="#5b9bd5"/><text x="286.2" y="366.3" font-size="8.7" fill="#595959">Gold</text>
<rect x="308" y="361.5" width="4.5" height="4.5" fill="#ed7d31"/><text x="317.4" y="366.3" font-size="8.4" fill="#6a6a6a">Silver</text>
<rect x="342.1" y="361.5" width="4.5" height="4.5" fill="#a5a5a5"/><text x="350.3" y="366.3" font-size="8.7" fill="#595959">Bronze</text>
<rect x="210.90" y="162.50" width="5.8" height="5.8" fill="#fff" stroke="#888" stroke-width="0.8"/>
<rect x="210.90" y="266.30" width="5.8" height="5.8" fill="#fff" stroke="#888" stroke-width="0.8"/>
<rect x="210.90" y="370.10" width="5.8" height="5.8" fill="#fff" stroke="#888" stroke-width="0.8"/>
<rect x="324.10" y="162.50" width="5.8" height="5.8" fill="#fff" stroke="#888" stroke-width="0.8"/>
<rect x="324.10" y="370.10" width="5.8" height="5.8" fill="#fff" stroke="#888" stroke-width="0.8"/>
<rect x="437.30" y="162.50" width="5.8" height="5.8" fill="#fff" stroke="#888" stroke-width="0.8"/>
<rect x="437.30" y="266.30" width="5.8" height="5.8" fill="#fff" stroke="#888" stroke-width="0.8"/>
<rect x="437.30" y="370.10" width="5.8" height="5.8" fill="#fff" stroke="#888" stroke-width="0.8"/>
</svg>
<svg width="999" height="562" style="font-family:'Liberation Sans'">
<defs>
 
</defs>
<g fill="#444">
 <text x="821.8" y="102.8" font-size="8" font-weight="bold">Размер</text>
 <text x="822" y="113.9" font-size="8">Ширина: 8.2 см</text>
 <text x="892.5" y="113.9" font-size="8">Высота: 7.5 см</text>
 <text x="822" y="137.3" font-size="8" font-weight="bold">Стиль обтекания</text>
</g>
<rect x="822" y="123" width="141" height="0.8" fill="#d6d6d6"/>
<rect x="822" y="194.2" width="141" height="0.8" fill="#d6d6d6"/>
<rect x="822" y="309.3" width="141" height="0.8" fill="#d6d6d6"/>
<rect x="822" y="337.2" width="141" height="0.8" fill="#d6d6d6"/>
<!-- wrap combo button right -->
<rect x="951.8" y="146.8" width="10.9" height="41.5" fill="#fff" stroke="#dcdcdc" stroke-width="0.7"/>
<path d="M955.4 168 L957.3 166 L959.2 168" fill="none" stroke="#444" stroke-width="0.9"/>
<!-- chart style combo -->
<rect x="823.9" y="261.2" width="139" height="40.8" fill="#fff" stroke="#d4d4d4" stroke-width="0.7"/>
<path d="M955.3 280 L957.3 282 L959.3 280" fill="none" stroke="#444" stroke-width="0.9"/>
<rect x="952.3" y="261.2" width="0.7" height="40.8" fill="#e4e4e4"/>

<rect x="824.6" y="267.8" width="38.3" height="32.5" fill="#fff" stroke="#777" stroke-width="1.4"/>
<rect x="834.3" y="270.5" width="3.0" height="16.46" fill="#ed7d31"/>
<rect x="834.3" y="286.96" width="3.0" height="4.64" fill="#5b9bd5"/>
<rect x="842.0" y="270.5" width="2.2" height="13.50" fill="#ed7d31"/>
<rect x="842.0" y="284.00" width="2.2" height="7.60" fill="#5b9bd5"/>
<rect x="848.6" y="270.5" width="3.0" height="12.24" fill="#ed7d31"/>
<rect x="848.6" y="282.74" width="3.0" height="8.86" fill="#5b9bd5"/>
<rect x="855.8" y="270.5" width="3.0" height="11.61" fill="#ed7d31"/>
<rect x="855.8" y="282.11" width="3.0" height="9.50" fill="#5b9bd5"/>
<rect x="830" y="271.00" width="2.5" height="0.6" fill="#bbb"/>
<rect x="830" y="273.40" width="2.5" height="0.6" fill="#bbb"/>
<rect x="830" y="275.80" width="2.5" height="0.6" fill="#bbb"/>
<rect x="830" y="278.20" width="2.5" height="0.6" fill="#bbb"/>
<rect x="830" y="280.60" width="2.5" height="0.6" fill="#bbb"/>
<rect x="830" y="283.00" width="2.5" height="0.6" fill="#bbb"/>
<rect x="830" y="285.40" width="2.5" height="0.6" fill="#bbb"/>
<rect x="830" y="287.80" width="2.5" height="0.6" fill="#bbb"/>
<rect x="830" y="290.20" width="2.5" height="0.6" fill="#bbb"/>
<rect x="864.9" y="267.8" width="37.3" height="32.5" fill="#fff" stroke="#dadada" stroke-width="0.7"/>
<rect x="873" y="268.6" width="20" height="1.3" fill="#8a8a8a"/>
<rect x="877" y="271.3" width="12" height="0.7" fill="#bbb"/>
<rect x="868.1" y="275" width="4.8" height="16.54" fill="#ed7d31"/>
<rect x="868.1" y="291.54" width="4.8" height="2.26" fill="#5b9bd5"/>
<rect x="877.0" y="275" width="4.8" height="13.16" fill="#ed7d31"/>
<rect x="877.0" y="288.16" width="4.8" height="5.64" fill="#5b9bd5"/>
<rect x="885.0" y="275" width="4.8" height="12.60" fill="#ed7d31"/>
<rect x="885.0" y="287.60" width="4.8" height="6.20" fill="#5b9bd5"/>
<rect x="893.0" y="275" width="4.8" height="11.66" fill="#ed7d31"/>
<rect x="893.0" y="286.66" width="4.8" height="7.14" fill="#5b9bd5"/>
<rect x="904.3" y="267.8" width="37.4" height="32.5" fill="#fff" stroke="#dadada" stroke-width="0.7"/>
<rect x="913" y="269.6" width="20" height="1.3" fill="#9a9a9a"/>
<rect x="917" y="272.6" width="12" height="0.7" fill="#ccc"/>
<rect x="914.5" y="276.5" width="3" height="13.60" fill="#f2b48d"/>
<rect x="914.5" y="290.10" width="3" height="3.40" fill="#8db7e2"/>
<rect x="921.5" y="276.5" width="3" height="11.90" fill="#f2b48d"/>
<rect x="921.5" y="288.40" width="3" height="5.10" fill="#8db7e2"/>
<rect x="928.3" y="276.5" width="3" height="11.05" fill="#f2b48d"/>
<rect x="928.3" y="287.55" width="3" height="5.95" fill="#8db7e2"/>
<rect x="935" y="276.5" width="3" height="10.20" fill="#f2b48d"/>
<rect x="935" y="286.70" width="3" height="6.80" fill="#8db7e2"/>
<rect x="912" y="277.00" width="27" height="0.4" fill="#d5d5d5"/>
<rect x="912" y="279.50" width="27" height="0.4" fill="#d5d5d5"/>
<rect x="912" y="282.00" width="27" height="0.4" fill="#d5d5d5"/>
<rect x="912" y="284.50" width="27" height="0.4" fill="#d5d5d5"/>
<rect x="912" y="287.00" width="27" height="0.4" fill="#d5d5d5"/>
<rect x="912" y="289.50" width="27" height="0.4" fill="#d5d5d5"/>
<rect x="912" y="292.00" width="27" height="0.4" fill="#d5d5d5"/>
<rect x="911" y="293.5" width="28" height="0.5" fill="#999"/>
<rect x="821.8" y="315.5" width="83" height="15.5" rx="1" fill="#fff" stroke="#cfcfcf" stroke-width="0.7"/>
<text x="830.3" y="326.3" font-size="8" fill="#444">Изменить данные</text>
<text x="838.3" y="351.9" font-size="8" fill="#444">Дополнительные параметры</text>
<path d="M838.5 355.2 H946.5" stroke="#777" stroke-width="0.7" stroke-dasharray="1.4 1.2"/>

<rect x="822.1" y="146.2" width="128.8" height="120.6" fill="#fff" style="filter:drop-shadow(0 1.5px 3px rgba(0,0,0,0.22))"/>
<rect x="825.6" y="148.2" width="37.5" height="37.8" fill="#fff" stroke="#e0e0e0" stroke-width="0.7"/>
<rect x="832.20" y="155.80" width="24.20" height="0.9" fill="#7a7a7a"/>
<rect x="832.20" y="158.10" width="24.20" height="0.9" fill="#7a7a7a"/>
<path transform="translate(837.50 160.00)" fill="#6e6e6e" d="M6.55 4.6 C5.2 2.2 2 0 0.6 0.2 C-0.3 0.6 0.2 4.2 1.6 5.8 C2.4 6.7 3.5 7.2 4.5 7.6 C2.5 8.8 1.8 12.8 3.6 13.7 C5 14.3 6 12.2 6.55 11 C7.1 12.2 8.1 14.3 9.5 13.7 C11.3 12.8 10.6 8.8 8.6 7.6 C9.6 7.2 10.7 6.7 11.5 5.8 C12.9 4.2 13.4 0.6 12.5 0.2 C11.1 0 7.9 2.2 6.55 4.6Z"/>
<rect x="832.20" y="173.30" width="5.00" height="0.9" fill="#c4c4c4"/>
<rect x="851.60" y="173.30" width="4.80" height="0.9" fill="#c4c4c4"/>
<rect x="832.20" y="175.80" width="24.20" height="0.9" fill="#c4c4c4"/>
<rect x="832.20" y="178.20" width="24.20" height="0.9" fill="#7a7a7a"/>
<rect x="864.5" y="148.2" width="37.5" height="37.8" fill="#fff" stroke="#e0e0e0" stroke-width="0.7"/>
<rect x="871.10" y="155.80" width="24.20" height="0.9" fill="#7a7a7a"/>
<rect x="871.10" y="158.10" width="24.20" height="0.9" fill="#7a7a7a"/>
<path transform="translate(876.40 160.00)" fill="#6e6e6e" d="M6.55 4.6 C5.2 2.2 2 0 0.6 0.2 C-0.3 0.6 0.2 4.2 1.6 5.8 C2.4 6.7 3.5 7.2 4.5 7.6 C2.5 8.8 1.8 12.8 3.6 13.7 C5 14.3 6 12.2 6.55 11 C7.1 12.2 8.1 14.3 9.5 13.7 C11.3 12.8 10.6 8.8 8.6 7.6 C9.6 7.2 10.7 6.7 11.5 5.8 C12.9 4.2 13.4 0.6 12.5 0.2 C11.1 0 7.9 2.2 6.55 4.6Z"/>
<rect x="871.10" y="160.50" width="4.70" height="0.9" fill="#7a7a7a"/>
<rect x="891.20" y="160.50" width="4.10" height="0.9" fill="#7a7a7a"/>
<rect x="871.10" y="162.75" width="4.70" height="0.9" fill="#c4c4c4"/>
<rect x="891.20" y="162.75" width="4.10" height="0.9" fill="#c4c4c4"/>
<rect x="871.10" y="165.00" width="4.70" height="0.9" fill="#7a7a7a"/>
<rect x="891.20" y="165.00" width="4.10" height="0.9" fill="#7a7a7a"/>
<rect x="871.10" y="167.25" width="4.70" height="0.9" fill="#c4c4c4"/>
<rect x="891.20" y="167.25" width="4.10" height="0.9" fill="#c4c4c4"/>
<rect x="871.10" y="169.50" width="4.70" height="0.9" fill="#7a7a7a"/>
<rect x="891.20" y="169.50" width="4.10" height="0.9" fill="#7a7a7a"/>
<rect x="871.10" y="171.75" width="4.70" height="0.9" fill="#c4c4c4"/>
<rect x="891.20" y="171.75" width="4.10" height="0.9" fill="#c4c4c4"/>
<rect x="871.10" y="174.00" width="4.70" height="0.9" fill="#7a7a7a"/>
<rect x="891.20" y="174.00" width="4.10" height="0.9" fill="#7a7a7a"/>
<rect x="871.10" y="176.20" width="24.20" height="0.9" fill="#c4c4c4"/>
<rect x="871.10" y="178.40" width="24.20" height="0.9" fill="#7a7a7a"/>
<rect x="904.0" y="148.2" width="37.5" height="37.8" fill="#fff" stroke="#7a7a7a" stroke-width="1.4"/>
<rect x="910.60" y="155.80" width="24.20" height="0.9" fill="#7a7a7a"/>
<rect x="910.60" y="158.10" width="24.20" height="0.9" fill="#7a7a7a"/>
<path transform="translate(915.90 160.00)" fill="#6e6e6e" d="M6.55 4.6 C5.2 2.2 2 0 0.6 0.2 C-0.3 0.6 0.2 4.2 1.6 5.8 C2.4 6.7 3.5 7.2 4.5 7.6 C2.5 8.8 1.8 12.8 3.6 13.7 C5 14.3 6 12.2 6.55 11 C7.1 12.2 8.1 14.3 9.5 13.7 C11.3 12.8 10.6 8.8 8.6 7.6 C9.6 7.2 10.7 6.7 11.5 5.8 C12.9 4.2 13.4 0.6 12.5 0.2 C11.1 0 7.9 2.2 6.55 4.6Z"/>
<rect x="910.60" y="160.50" width="5.90" height="0.9" fill="#7a7a7a"/>
<rect x="929.50" y="160.50" width="5.30" height="0.9" fill="#7a7a7a"/>
<rect x="910.60" y="162.75" width="5.90" height="0.9" fill="#c4c4c4"/>
<rect x="929.50" y="162.75" width="5.30" height="0.9" fill="#c4c4c4"/>
<rect x="910.60" y="165.00" width="4.70" height="0.9" fill="#7a7a7a"/>
<rect x="930.70" y="165.00" width="4.10" height="0.9" fill="#7a7a7a"/>
<rect x="910.60" y="167.25" width="4.70" height="0.9" fill="#c4c4c4"/>
<rect x="930.70" y="167.25" width="4.10" height="0.9" fill="#c4c4c4"/>
<rect x="910.60" y="169.50" width="4.70" height="0.9" fill="#7a7a7a"/>
<rect x="930.70" y="169.50" width="4.10" height="0.9" fill="#7a7a7a"/>
<rect x="910.60" y="171.75" width="5.90" height="0.9" fill="#c4c4c4"/>
<rect x="929.50" y="171.75" width="5.30" height="0.9" fill="#c4c4c4"/>
<rect x="910.60" y="174.00" width="5.90" height="0.9" fill="#7a7a7a"/>
<rect x="929.50" y="174.00" width="5.30" height="0.9" fill="#7a7a7a"/>
<rect x="910.60" y="176.20" width="24.20" height="0.9" fill="#c4c4c4"/>
<rect x="910.60" y="178.40" width="24.20" height="0.9" fill="#7a7a7a"/>
<rect x="825.6" y="188.2" width="37.5" height="37.8" fill="#fff" stroke="#e0e0e0" stroke-width="0.7"/>
<rect x="832.20" y="195.40" width="24.20" height="0.9" fill="#7a7a7a"/>
<rect x="832.20" y="197.60" width="24.20" height="0.9" fill="#c4c4c4"/>
<rect x="832.20" y="200.00" width="24.20" height="0.9" fill="#7a7a7a"/>
<rect x="832.20" y="202.25" width="24.20" height="0.9" fill="#c4c4c4"/>
<rect x="832.20" y="204.50" width="24.20" height="0.9" fill="#7a7a7a"/>
<rect x="832.20" y="206.75" width="24.20" height="0.9" fill="#c4c4c4"/>
<rect x="832.20" y="209.00" width="24.20" height="0.9" fill="#7a7a7a"/>
<rect x="832.20" y="211.25" width="24.20" height="0.9" fill="#c4c4c4"/>
<rect x="832.20" y="213.50" width="24.20" height="0.9" fill="#7a7a7a"/>
<path transform="translate(837.50 200.00)" fill="#6e6e6e" d="M6.55 4.6 C5.2 2.2 2 0 0.6 0.2 C-0.3 0.6 0.2 4.2 1.6 5.8 C2.4 6.7 3.5 7.2 4.5 7.6 C2.5 8.8 1.8 12.8 3.6 13.7 C5 14.3 6 12.2 6.55 11 C7.1 12.2 8.1 14.3 9.5 13.7 C11.3 12.8 10.6 8.8 8.6 7.6 C9.6 7.2 10.7 6.7 11.5 5.8 C12.9 4.2 13.4 0.6 12.5 0.2 C11.1 0 7.9 2.2 6.55 4.6Z"/>
<rect x="832.20" y="215.80" width="24.20" height="0.9" fill="#7a7a7a"/>
<rect x="832.20" y="218.00" width="24.20" height="0.9" fill="#7a7a7a"/>
<rect x="864.5" y="188.2" width="37.5" height="37.8" fill="#fff" stroke="#e0e0e0" stroke-width="0.7"/>
<rect x="871.10" y="195.40" width="24.20" height="1.2" fill="#c4c4c4"/>
<rect x="871.10" y="197.60" width="24.20" height="0.9" fill="#c4c4c4"/>
<path transform="translate(876.40 200.00)" fill="#6e6e6e" d="M6.55 4.6 C5.2 2.2 2 0 0.6 0.2 C-0.3 0.6 0.2 4.2 1.6 5.8 C2.4 6.7 3.5 7.2 4.5 7.6 C2.5 8.8 1.8 12.8 3.6 13.7 C5 14.3 6 12.2 6.55 11 C7.1 12.2 8.1 14.3 9.5 13.7 C11.3 12.8 10.6 8.8 8.6 7.6 C9.6 7.2 10.7 6.7 11.5 5.8 C12.9 4.2 13.4 0.6 12.5 0.2 C11.1 0 7.9 2.2 6.55 4.6Z"/>
<rect x="871.10" y="215.40" width="24.20" height="1.0" fill="#7a7a7a"/>
<rect x="871.10" y="217.80" width="24.20" height="0.9" fill="#7a7a7a"/>
<rect x="904.0" y="188.2" width="37.5" height="37.8" fill="#fff" stroke="#7a7a7a" stroke-width="1.4"/>
<rect x="910.60" y="195.40" width="24.20" height="0.9" fill="#c4c4c4"/>
<rect x="910.60" y="197.80" width="24.20" height="0.9" fill="#c4c4c4"/>
<rect x="910.60" y="200.20" width="24.20" height="0.9" fill="#c4c4c4"/>
<rect x="910.60" y="202.60" width="24.20" height="0.9" fill="#c4c4c4"/>
<rect x="910.60" y="205.00" width="24.20" height="0.9" fill="#c4c4c4"/>
<rect x="910.60" y="207.40" width="24.20" height="0.9" fill="#c4c4c4"/>
<rect x="910.60" y="209.80" width="24.20" height="0.9" fill="#c4c4c4"/>
<rect x="910.60" y="212.20" width="24.20" height="0.9" fill="#c4c4c4"/>
<rect x="910.60" y="214.60" width="24.20" height="0.9" fill="#c4c4c4"/>
<path transform="translate(915.90 200.00)" fill="#6e6e6e" d="M6.55 4.6 C5.2 2.2 2 0 0.6 0.2 C-0.3 0.6 0.2 4.2 1.6 5.8 C2.4 6.7 3.5 7.2 4.5 7.6 C2.5 8.8 1.8 12.8 3.6 13.7 C5 14.3 6 12.2 6.55 11 C7.1 12.2 8.1 14.3 9.5 13.7 C11.3 12.8 10.6 8.8 8.6 7.6 C9.6 7.2 10.7 6.7 11.5 5.8 C12.9 4.2 13.4 0.6 12.5 0.2 C11.1 0 7.9 2.2 6.55 4.6Z"/>
<rect x="825.6" y="227.2" width="37.5" height="37.8" fill="#fff" stroke="#e0e0e0" stroke-width="0.7"/>
<path transform="translate(837.50 239.00)" fill="#707070" d="M6.55 4.6 C5.2 2.2 2 0 0.6 0.2 C-0.3 0.6 0.2 4.2 1.6 5.8 C2.4 6.7 3.5 7.2 4.5 7.6 C2.5 8.8 1.8 12.8 3.6 13.7 C5 14.3 6 12.2 6.55 11 C7.1 12.2 8.1 14.3 9.5 13.7 C11.3 12.8 10.6 8.8 8.6 7.6 C9.6 7.2 10.7 6.7 11.5 5.8 C12.9 4.2 13.4 0.6 12.5 0.2 C11.1 0 7.9 2.2 6.55 4.6Z"/>
<rect x="832.20" y="234.80" width="24.20" height="0.8" fill="#7a7a7a"/>
<rect x="832.20" y="237.05" width="24.20" height="0.8" fill="#c8c8c8"/>
<rect x="832.20" y="239.30" width="24.20" height="0.8" fill="#c8c8c8"/>
<rect x="832.20" y="241.55" width="24.20" height="0.8" fill="#c8c8c8"/>
<rect x="832.20" y="243.80" width="24.20" height="0.8" fill="#c8c8c8"/>
<rect x="832.20" y="246.05" width="24.20" height="0.8" fill="#c8c8c8"/>
<rect x="832.20" y="248.30" width="24.20" height="0.8" fill="#c8c8c8"/>
<rect x="832.20" y="250.55" width="24.20" height="0.8" fill="#c8c8c8"/>
<rect x="832.20" y="252.80" width="24.20" height="0.8" fill="#c8c8c8"/>
<rect x="832.20" y="255.05" width="24.20" height="0.8" fill="#7a7a7a"/>
<rect x="904.5" y="213.6" width="72.5" height="17.8" rx="2" fill="#fff" style="filter:drop-shadow(0 1px 2.5px rgba(0,0,0,0.25))"/>
<text x="913" y="225.6" font-size="8" fill="#444">Перед текстом</text>

<rect x="971.5" y="240" width="27.5" height="22" fill="#7b848e"/>
<g fill="none" stroke="#9a9a9a" stroke-width="0.9">
 <rect x="980.6" y="136.3" width="11" height="7.2"/>
 <path d="M980.6 138.8 H991.6 M980.6 141.2 H991.6 M984.2 136.3 V143.5 M987.9 136.3 V143.5"/>
 <rect x="981.8" y="161.6" width="8.6" height="10.2"/>
 <path d="M982 170 L984.8 166.6 L986.6 168.3 L990.3 164.3"/>
 <rect x="982.2" y="187" width="7.8" height="14"/>
 <path d="M984 219 V218.6 H981.3 V227.5 H985"/>
 <circle cx="987.8" cy="224.5" r="3.4"/>
 <rect x="980.8" y="303.8" width="10.4" height="7.4"/>
 <path d="M980.8 303.8 L986 308.4 L991.2 303.8 M980.8 311.2 L984.2 307.4 M991.2 311.2 L987.8 307.4"/>
 <path d="M982 285.5 C983.2 282.8 987.5 282.8 988.8 285.5"/>
</g>
<rect x="982.5" y="188.2" width="7" height="1.6" fill="#999"/>
<rect x="982.5" y="198.4" width="7" height="1.6" fill="#999"/>
<text x="985.5" y="115.8" font-size="11.5" font-weight="bold" fill="#a8a8a8" text-anchor="middle">¶</text>
<text x="985.5" y="282" font-size="9.5" fill="#a0a0a0" text-anchor="middle">Ta</text>
<g fill="none" stroke="#fff" stroke-width="0.9">
 <rect x="980.9" y="251.6" width="2" height="3.6"/>
 <rect x="984.6" y="249.2" width="2" height="6"/>
 <rect x="988.4" y="246.3" width="2" height="8.9"/>
</g>
</svg>

<div class="a" style="left:0;top:544px;width:999px;height:18px;background:#f1f1f1;border-top:1px solid #d4d4d4"></div>
<svg width="999" height="562" style="font-family:'Liberation Sans'">
 <g font-size="8" font-weight="bold" fill="#555">
  <text x="29.6" y="556.4">Страница 2 из 3</text>
  <text x="121" y="556.4">Количество слов</text>
  <text x="356.6" y="556.4">Все изменения сохранены</text>
  <text x="643.6" y="556.4">English (United States)</text>
  <text x="894.4" y="556.4">Масштаб 100%</text>
 </g>
 <g fill="#dadada">
  <rect x="98" y="545" width="1" height="17"/>
  <rect x="634" y="545" width="1" height="17"/>
  <rect x="788.5" y="545" width="1" height="17"/>
  <rect x="824.2" y="545" width="1" height="17"/>
 </g>
 <!-- word count icon -->
 <g fill="#555">
  <rect x="105.2" y="547.6" width="9.8" height="0.9"/>
  <rect x="105.2" y="549.6" width="9.8" height="0.9"/>
  <rect x="105.2" y="551.6" width="9.8" height="0.9"/>
 </g>
 <text x="110" y="559.6" font-size="4.6" fill="#555" text-anchor="middle">123</text>
 <!-- chevrons -->
 <g fill="none" stroke="#555" stroke-width="0.9">
  <path d="M736.8 552.7 L738.6 554.5 L740.4 552.7"/>
  <path d="M811.6 552.7 L813.4 554.5 L815.2 552.7"/>
 </g>
 <!-- globe -->
 <g fill="none" stroke="#555" stroke-width="0.9">
  <circle cx="752.5" cy="553.3" r="5.2"/>
  <ellipse cx="752.5" cy="553.3" rx="2.3" ry="5.2"/>
  <path d="M747.3 553.3 H757.7 M748.2 550.5 H756.8 M748.2 556.1 H756.8"/>
 </g>
 <!-- spellcheck icon -->
 <rect x="766.7" y="546" width="14.2" height="14.6" fill="#7b7b7b"/>
 <text x="773.6" y="552.8" font-size="6" font-weight="bold" fill="#fff" text-anchor="middle">abc</text>
 <path d="M771.5 554.5 L773.6 557.8 L777 552.5" fill="none" stroke="#fff" stroke-width="1"/>
 <!-- track changes -->
 <g fill="none" stroke="#555" stroke-width="0.9">
  <path d="M805 547.5 H797.5 V559.3 H805 V556.5"/>
  <path d="M799 550.2 H802.5 M799 552.4 H801.8 M799 554.6 H800.8"/>
  <path d="M807.6 549.5 L802.8 555.2 L802 557.3 L804 556.3 L808.8 550.7Z"/>
 </g>
 <!-- fit page -->
 <g fill="none" stroke="#555" stroke-width="0.9">
  <rect x="834.5" y="548.2" width="9.2" height="10.2"/>
 </g>
 <g fill="#555">
  <path d="M835.8 549.5 L838.6 549.5 L835.8 552.3Z M842.4 549.5 L839.6 549.5 L842.4 552.3Z M835.8 557.1 L838.6 557.1 L835.8 554.3Z M842.4 557.1 L839.6 557.1 L842.4 554.3Z"/>
 </g>
 <!-- fit width -->
 <g fill="none" stroke="#555" stroke-width="0.9">
  <path d="M856.2 548.5 V558.2 M867.8 548.5 V558.2 M858 553.3 H866 M860 551.3 L858 553.3 L860 555.3 M864 551.3 L866 553.3 L864 555.3"/>
  <path d="M880 553.3 H888"/>
  <path d="M959.8 553.3 H967.8 M963.8 549.3 V557.3"/>
 </g>
</svg>

</body></html>
